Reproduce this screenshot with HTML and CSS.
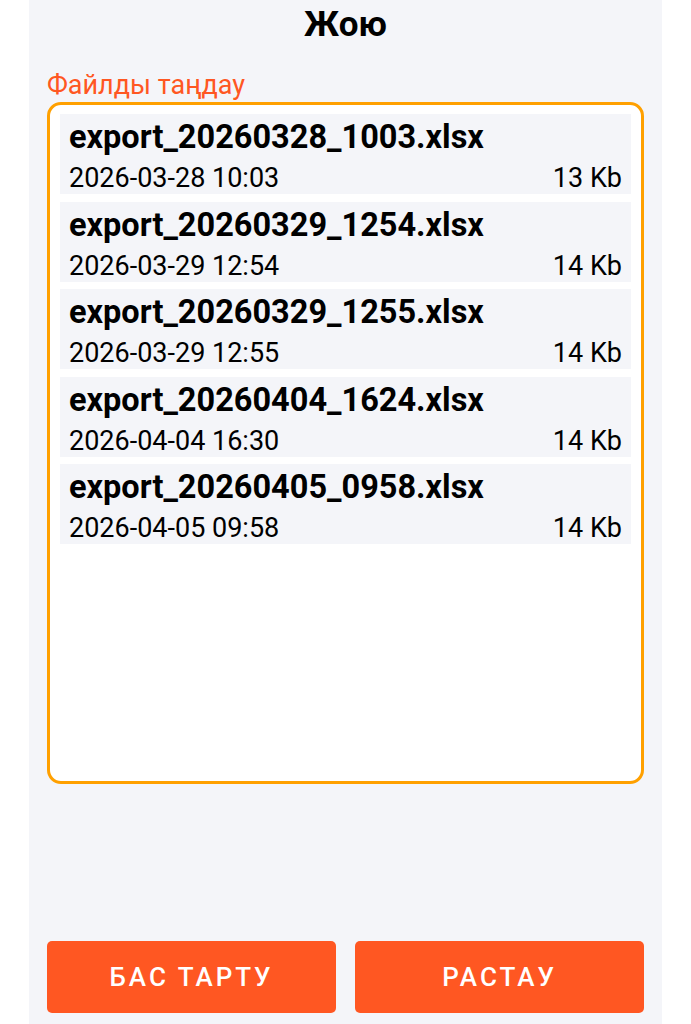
FILE: index.html
```html
<!DOCTYPE html>
<html lang="kk">
<head>
    <meta charset="utf-8">
    <title>Жою</title>
    <link rel="stylesheet" href="styles.css">
</head>
<body>
<div class="screen">
    <div class="title">Жою</div>
    <div class="label">Файлды таңдау</div>
    <div class="files">
        <div class="file">
            <div class="file-name">export_20260328_1003.xlsx</div>
            <div class="file-meta"><span>2026-03-28 10:03</span><span>13 Kb</span></div>
        </div>
        <div class="file">
            <div class="file-name">export_20260329_1254.xlsx</div>
            <div class="file-meta"><span>2026-03-29 12:54</span><span>14 Kb</span></div>
        </div>
        <div class="file">
            <div class="file-name">export_20260329_1255.xlsx</div>
            <div class="file-meta"><span>2026-03-29 12:55</span><span>14 Kb</span></div>
        </div>
        <div class="file">
            <div class="file-name">export_20260404_1624.xlsx</div>
            <div class="file-meta"><span>2026-04-04 16:30</span><span>14 Kb</span></div>
        </div>
        <div class="file">
            <div class="file-name">export_20260405_0958.xlsx</div>
            <div class="file-meta"><span>2026-04-05 09:58</span><span>14 Kb</span></div>
        </div>
    </div>
    <div class="actions">
        <button type="button" class="btn">Бас тарту</button>
        <button type="button" class="btn">Растау</button>
    </div>
</div>
</body>
</html>
```

FILE: styles.css
```css
html, body {
    margin: 0;
    padding: 0;
    background: #fff;
}
body {
    font-family: Roboto, "Liberation Sans", sans-serif;
    color: #000;
}
.screen {
    margin: 0 29px;
    height: 1024px;
    box-sizing: border-box;
    padding: 0 18px 11px;
    background: #f4f5f9;
    display: flex;
    flex-direction: column;
}
.title {
    height: 50px;
    line-height: 50px;
    text-align: center;
    font-size: 35px;
    font-weight: bold;
}
.label {
    margin-top: 21px;
    line-height: 28px;
    font-size: 27px;
    color: #ff5722;
}
.files {
    margin-top: 3px;
    height: 682px;
    box-sizing: border-box;
    border: 3px solid #ffa000;
    border-radius: 14px;
    background: #fff;
    padding: 9px 10px;
}
.file {
    height: 80px;
    box-sizing: border-box;
    padding: 5px 9px 0;
    margin-bottom: 7.5px;
    background: #f4f5f9;
}
.file-name {
    font-size: 32.5px;
    font-weight: bold;
    line-height: 36px;
    white-space: nowrap;
}
.file-meta {
    margin-top: 7px;
    display: flex;
    justify-content: space-between;
    font-size: 27px;
    line-height: 32px;
}
.actions {
    margin-top: auto;
    display: grid;
    grid-template-columns: 1fr 1fr;
    gap: 19px;
}
.btn {
    height: 72px;
    border: 0;
    border-radius: 5px;
    background: #ff5722;
    color: #fff;
    font-family: Roboto, "Liberation Sans", sans-serif;
    font-size: 26px;
    font-weight: 500;
    letter-spacing: 3px;
    text-transform: uppercase;
}
```
